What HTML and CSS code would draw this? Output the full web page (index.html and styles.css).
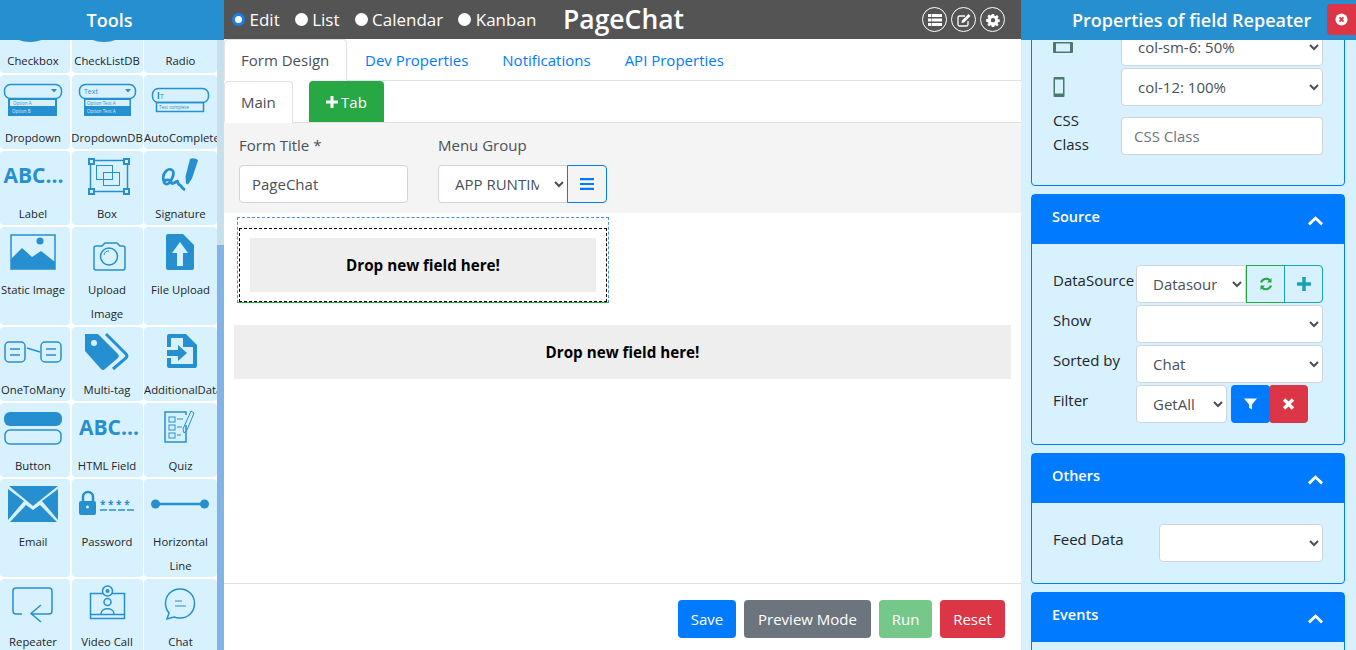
FILE: index.html
```html
<!DOCTYPE html>
<html lang="en">
<head>
<meta charset="utf-8">
<title>PageChat</title>
<link rel="stylesheet" href="styles.css">
</head>
<body>
<div class="app">
  <aside class="tools">
    <h2 class="tools-head">Tools</h2>
    <div class="tools-body">
      <div class="tile-grid">
        <div class="tile"><svg class="ico" viewBox="0 0 73 50"><ellipse cx="30" cy="36" rx="17" ry="8"/></svg><span class="lbl">Checkbox</span></div>
        <div class="tile"><svg class="ico" viewBox="0 0 73 50"><ellipse cx="32" cy="36" rx="17" ry="8"/></svg><span class="lbl">CheckListDB</span></div>
        <div class="tile"><svg class="ico" viewBox="0 0 73 50"></svg><span class="lbl">Radio</span></div>

        <div class="tile"><svg class="ico" viewBox="0 0 73 50"><rect class="ln" x="4.500" y="9.500" width="57" height="14" rx="6"/><path d="M51 14h6l-3 3.500z"/><rect x="8" y="24" width="49" height="17"/><rect class="lite" x="10" y="25" width="45" height="6"/><text class="tiny" x="13" y="30">Option A</text><text class="tiny wh" x="12" y="38">Option B</text></svg><span class="lbl">Dropdown</span></div>
        <div class="tile"><svg class="ico" viewBox="0 0 73 50"><rect class="ln" x="7.500" y="9.500" width="56" height="14" rx="6"/><path d="M53 14h6l-3 3.500z"/><text class="tiny2" x="12" y="19">Text</text><rect x="12" y="24" width="47" height="17"/><rect class="lite" x="13.500" y="25" width="44" height="6"/><text class="tiny" x="15" y="30">Option Text A</text><text class="tiny wh" x="15" y="38">Option Text A</text></svg><span class="lbl">DropdownDB</span></div>
        <div class="tile"><svg class="ico" viewBox="0 0 73 50"><rect class="ln" x="8.500" y="13.500" width="56" height="14" rx="6"/><path class="ln" d="M14.500 17v7"/><text class="tiny2" x="16" y="23.500">T</text><rect class="ln" x="12.500" y="27.500" width="47" height="9"/><text class="tiny" x="15" y="34">Text complete</text></svg><span class="lbl clip">AutoComplete</span></div>

        <div class="tile"><svg class="ico" viewBox="0 0 73 50"><text class="abc" x="3.500" y="32">ABC...</text></svg><span class="lbl">Label</span></div>
        <div class="tile"><svg class="ico" viewBox="0 0 73 50"><rect class="ln" x="18.500" y="9.500" width="37" height="31"/><rect class="ln thin" x="24.500" y="14.500" width="16" height="14"/><rect class="ln thin" x="31.500" y="21.500" width="16" height="13"/><rect x="16" y="7" width="7" height="7"/><rect x="51" y="7" width="7" height="7"/><rect x="16" y="37" width="7" height="7"/><rect x="51" y="37" width="7" height="7"/><rect class="lite" x="18" y="9" width="3" height="3"/><rect class="lite" x="53" y="9" width="3" height="3"/><rect class="lite" x="18" y="39" width="3" height="3"/><rect class="lite" x="53" y="39" width="3" height="3"/></svg><span class="lbl">Box</span></div>
        <div class="tile"><svg class="ico" viewBox="0 0 73 50"><path d="M46 8c2-1.500 7-.5 8 1.500l-6 18-4 6-2-1-.5-7z"/><path class="ln scrib" d="M20 31c-3-8 4-15 8-12s-2 15-6 14-1-5 3-4 1 5 5 3 3-3 4 0 2 1 3 3 2 3 4 4"/></svg><span class="lbl">Signature</span></div>

        <div class="tile"><svg class="ico" viewBox="0 0 73 50"><rect class="ln" x="11" y="8" width="44" height="34" stroke-width="2"/><path d="M11 42V32l11-11 10 9 9-6 14 11v7z"/><circle cx="40" cy="14" r="3.500"/></svg><span class="lbl">Static Image</span></div>
        <div class="tile"><svg class="ico" viewBox="0 0 73 50"><path class="ln" d="M22 21a2 2 0 0 1 2-2h6l3-3h12l3 3h3a2 2 0 0 1 2 2v20a2 2 0 0 1-2 2H24a2 2 0 0 1-2-2z"/><circle class="ln" cx="37" cy="29.500" r="8.500"/><path class="ln thin" d="M32 28a5 5 0 0 1 5-4"/></svg><span class="lbl">Upload<br>Image</span></div>
        <div class="tile"><svg class="ico" viewBox="0 0 73 50"><path d="M24 7h15l11 11v23a2 2 0 0 1-2 2H24a2 2 0 0 1-2-2V9a2 2 0 0 1 2-2z"/><path class="cut" d="M36 15l8 11h-5v13h-6V26h-5z"/></svg><span class="lbl">File Upload</span></div>

        <div class="tile"><svg class="ico" viewBox="0 0 73 50"><rect class="ln" x="5" y="15" width="20" height="20" rx="4"/><rect class="ln" x="41" y="15" width="20" height="20" rx="4"/><path class="ln" d="M10 22h10M10 28h10M46 22h10M46 28h10M27 21l13 4"/></svg><span class="lbl">OneToMany</span></div>
        <div class="tile"><svg class="ico" viewBox="0 0 73 50"><path d="M13 7h12a3 3 0 0 1 2 1l19 19a3 3 0 0 1 0 4L33 42a3 3 0 0 1-4 0L13 24z"/><circle class="cutc" cx="22" cy="16" r="3"/><path class="ln wide" d="M34 7l20 20a3 3 0 0 1 0 4L41 42"/></svg><span class="lbl">Multi-tag</span></div>
        <div class="tile"><svg class="ico" viewBox="0 0 73 50"><path d="M25 7h17l11 11v21a2 2 0 0 1-2 2H25a2 2 0 0 1-2-2V31h4v6h22V20H39V11H27v9h-4V9a2 2 0 0 1 2-2z"/><path d="M23 23h11v-5l9 8-9 8v-5H23z"/></svg><span class="lbl clip">AdditionalData</span></div>

        <div class="tile"><svg class="ico" viewBox="0 0 73 50"><rect x="4" y="9" width="58" height="14" rx="6"/><rect class="ln" x="5" y="27" width="56" height="14" rx="5"/></svg><span class="lbl">Button</span></div>
        <div class="tile"><svg class="ico" viewBox="0 0 73 50"><text class="abc" x="7" y="32">ABC...</text></svg><span class="lbl">HTML Field</span></div>
        <div class="tile"><svg class="ico" viewBox="0 0 73 50"><path class="ln" d="M42 22v17H21V9h21v3"/><rect class="ln thin" x="25" y="14" width="6" height="5"/><rect class="ln thin" x="25" y="22" width="6" height="5"/><rect class="ln thin" x="25" y="30" width="6" height="5"/><path class="ln thin" d="M33 16h6M33 24h5M33 32h4"/><path class="ln thin" d="M47 8l3 2-7 17-3 3-1-4z"/></svg><span class="lbl">Quiz</span></div>

        <div class="tile"><svg class="ico" viewBox="0 0 73 50"><path d="M9 7h49L33 27z"/><path d="M8 10l16 12L8 41zM58 10v31L42 22z"/><path d="M10 43l16-17 7 5 7-5 17 17z"/></svg><span class="lbl">Email</span></div>
        <div class="tile"><svg class="ico" viewBox="0 0 73 50"><path class="ln thick" d="M11 23v-5a5 5 0 0 1 10 0v4"/><rect x="7" y="22" width="17" height="14" rx="2"/><circle class="cutc" cx="15.500" cy="28" r="1.500"/><text class="stars" x="28" y="29">* * * *</text><path class="ln dash" d="M28 31h36"/></svg><span class="lbl">Password</span></div>
        <div class="tile"><svg class="ico" viewBox="0 0 73 50"><path class="ln thick" d="M8 25h56"/><circle cx="11.500" cy="25" r="4.500"/><circle cx="60.500" cy="25" r="4.500"/></svg><span class="lbl">Horizontal<br>Line</span></div>

        <div class="tile"><svg class="ico" viewBox="0 0 73 50"><path class="ln" d="M22 35h-6a3 3 0 0 1-3-3V12a3 3 0 0 1 3-3h33a3 3 0 0 1 3 3v20a3 3 0 0 1-3 3H31M41 26l-10 8.500 10 8.500"/></svg><span class="lbl">Repeater</span></div>
        <div class="tile"><svg class="ico" viewBox="0 0 73 50"><rect class="ln" x="18.500" y="14.500" width="34" height="25"/><path class="ln" d="M18 35.500h35"/><circle class="fillbg ln" cx="35.500" cy="12" r="5"/><circle cx="35.500" cy="12" r="2"/><circle class="ln" cx="35.500" cy="23" r="3.500"/><path class="ln" d="M29 35c0-7 13-7 13 0"/></svg><span class="lbl">Video Call</span></div>
        <div class="tile"><svg class="ico" viewBox="0 0 73 50"><path class="ln" d="M36 10c8 0 14.500 6 14.500 14.500S44 39 36 39a15 15 0 0 1-6-1l-7 2 2-6a15 15 0 0 1-3.500-9.500C21.500 16 28 10 36 10z"/><path class="ln thin" d="M31 22h7M31 27h11"/></svg><span class="lbl">Chat</span></div>
      </div>
      <div class="scroll-track"><div class="scroll-thumb"></div></div>
    </div>
  </aside>

  <main class="center">
    <header class="topbar">
      <div class="modes">
        <label class="mode"><input class="radio" type="radio" name="mode" checked>Edit</label>
        <label class="mode"><input class="radio" type="radio" name="mode">List</label>
        <label class="mode"><input class="radio" type="radio" name="mode">Calendar</label>
        <label class="mode"><input class="radio" type="radio" name="mode">Kanban</label>
      </div>
      <h1 class="page-title">PageChat</h1>
      <div class="round-btns">
        <span class="round"><svg viewBox="0 0 16 16"><path d="M1 2h14v3H1zM1 6.500h14v3H1zM1 11h14v3H1z"/><path class="gap" d="M4.500 2v12"/></svg></span>
        <span class="round"><svg viewBox="0 0 16 16"><path class="outl" d="M12 9v3.500a1.500 1.500 0 0 1-1.500 1.500h-7A1.500 1.500 0 0 1 2 12.500v-7A1.500 1.500 0 0 1 3.500 4H9"/><path d="M12.500 2l2 2-6.500 6.500-2.500.5.500-2.500z"/></svg></span>
        <span class="round"><svg class="cog" viewBox="0 0 16 16"><path fill-rule="evenodd" d="M6.700 1h2.600l.4 2 1.200.5 1.700-1.100 1.800 1.800-1.100 1.700.5 1.200 2 .4v2.600l-2 .4-.5 1.200 1.100 1.700-1.800 1.800-1.700-1.100-1.200.5-.4 2H6.700l-.4-2-1.200-.5-1.700 1.100-1.800-1.800 1.100-1.700-.5-1.200-2-.4V6.900l2-.4.5-1.200-1.100-1.700 1.800-1.800 1.700 1.100 1.200-.5zM8 5.700a2.500 2.500 0 1 0 0 5 2.500 2.500 0 0 0 0-5z"/></svg></span>
      </div>
    </header>

    <nav class="tabs main-tabs">
      <a class="tab active">Form Design</a>
      <a class="tab">Dev Properties</a>
      <a class="tab">Notifications</a>
      <a class="tab">API Properties</a>
    </nav>
    <nav class="tabs sub-tabs">
      <a class="tab active">Main</a>
      <a class="add-tab"><svg class="plus" viewBox="0 0 12 12"><path d="M4.500 0h3v4.500H12v3H7.500V12h-3V7.500H0v-3h4.500z"/></svg>Tab</a>
    </nav>

    <section class="form-head">
      <div class="fg title-field">
        <label class="fl">Form Title *</label>
        <input class="ctl" type="text" value="PageChat">
      </div>
      <div class="fg">
        <label class="fl">Menu Group</label>
        <div class="group">
          <select class="ctl menu-select"><option>APP RUNTIME</option></select>
          <button class="menu-btn"><svg viewBox="0 0 14 12"><path d="M0 0h14v2.200H0zM0 4.900h14v2.200H0zM0 9.800h14V12H0z"/></svg></button>
        </div>
      </div>
    </section>

    <section class="canvas">
      <div class="outer-drop">
        <div class="inner-drop"><div class="drop">Drop new field here!</div></div>
      </div>
      <div class="drop wide-drop">Drop new field here!</div>
    </section>

    <footer class="actions">
      <button class="btn b-blue">Save</button>
      <button class="btn b-grey">Preview Mode</button>
      <button class="btn b-green">Run</button>
      <button class="btn b-red">Reset</button>
    </footer>
  </main>

  <aside class="props">
    <header class="props-head">
      <h2 class="props-title">Properties of field Repeater</h2>
      <button class="close"><svg viewBox="0 0 14 14"><circle cx="7" cy="7" r="6.500"/><path d="M4.800 4.800l4.400 4.400M9.200 4.800l-4.400 4.400"/></svg></button>
    </header>
    <div class="props-body">
      <div class="card first-card">
        <div class="card-body">
          <div class="row r-first">
            <span class="dev"><svg class="tablet" viewBox="0 0 20 11"><path fill-rule="evenodd" d="M1 0h18a1 1 0 0 1 1 1v9a1 1 0 0 1-1 1H1a1 1 0 0 1-1-1V1a1 1 0 0 1 1-1zm2 1.500v8h14v-8z"/></svg></span>
            <select class="ctl"><option>col-sm-6: 50%</option></select>
          </div>
          <div class="row">
            <span class="dev"><svg class="phone" viewBox="0 0 11 20"><path fill-rule="evenodd" d="M1 0h9a1 1 0 0 1 1 1v18a1 1 0 0 1-1 1H1a1 1 0 0 1-1-1V1a1 1 0 0 1 1-1zm.5 2.500v14h8v-14z"/></svg></span>
            <select class="ctl"><option>col-12: 100%</option></select>
          </div>
          <div class="row r-css">
            <label class="rl css-l">CSS<br>Class</label>
            <input class="ctl css-in" type="text" placeholder="CSS Class">
          </div>
        </div>
      </div>

      <div class="card">
        <div class="card-head">Source<svg class="chev" viewBox="0 0 16 10"><path d="M8 0l8 7.500-2 2.200-6-5.700-6 5.700L0 7.500z"/></svg></div>
        <div class="card-body source-body">
          <div class="row src-row">
            <label class="rl">DataSource</label>
            <div class="group">
              <select class="ctl ds-select"><option>Datasource</option></select>
              <button class="ib ib-green"><svg viewBox="0 0 16 16"><path d="M13.500 2v4.500H9l1.700-1.700A4 4 0 0 0 4.300 6.500H2A6.200 6.200 0 0 1 12.200 3.300zM2.500 14V9.500H7l-1.700 1.700a4 4 0 0 0 6.400-1.700H14a6.200 6.200 0 0 1-10.200 3.200z"/></svg></button>
              <button class="ib ib-teal"><svg viewBox="0 0 12 12"><path d="M4.500 0h3v4.500H12v3H7.500V12h-3V7.500H0v-3h4.500z"/></svg></button>
            </div>
          </div>
          <div class="row src-row">
            <label class="rl">Show</label>
            <select class="ctl"><option></option></select>
          </div>
          <div class="row src-row">
            <label class="rl">Sorted by</label>
            <select class="ctl"><option>Chat</option></select>
          </div>
          <div class="row src-row">
            <label class="rl">Filter</label>
            <div class="group filter-group">
              <select class="ctl filter-select"><option>GetAll</option></select>
              <button class="fb fb-blue"><svg viewBox="0 0 14 14"><path d="M0 1h14L8.500 7.500V13l-3-2V7.500z"/></svg></button>
              <button class="fb fb-red"><svg viewBox="0 0 12 12"><path d="M3 .8L6 3.800 9 .8l2.200 2.200-3 3 3 3L9 11.200l-3-3-3 3L.8 9l3-3-3-3z"/></svg></button>
            </div>
          </div>
        </div>
      </div>

      <div class="card">
        <div class="card-head">Others<svg class="chev" viewBox="0 0 16 10"><path d="M8 0l8 7.500-2 2.200-6-5.700-6 5.700L0 7.500z"/></svg></div>
        <div class="card-body others-body">
          <div class="row feed-row">
            <label class="rl">Feed Data</label>
            <select class="ctl"><option></option></select>
          </div>
        </div>
      </div>

      <div class="card">
        <div class="card-head">Events<svg class="chev" viewBox="0 0 16 10"><path d="M8 0l8 7.500-2 2.200-6-5.700-6 5.700L0 7.500z"/></svg></div>
        <div class="card-body events-body"></div>
      </div>
    </div>
  </aside>
</div>
</body>
</html>
```

FILE: styles.css
```css
* { box-sizing: border-box; }
html, body { margin: 0; height: 100%; overflow: hidden; }
body { font-family: "Open Sans", "Noto Sans", sans-serif; font-size: 15px; color: #212529; background: #fff; }
h1, h2 { margin: 0; }
button { font-family: inherit; }

.app { display: flex; width: 1356px; height: 650px; overflow: hidden; }

/* left tool panel */
.tools { width: 224px; flex: none; display: flex; flex-direction: column; }
.tools-head { height: 40px; flex: none; background: #268fd0; color: #fff; font-size: 18px; font-weight: 600; line-height: 40px; text-align: center; padding-right: 5px; }
.tools-body { flex: 1; min-height: 0; display: flex; overflow: hidden; }
.tile-grid { width: 217px; height: 700px; flex: none; margin-top: -42px; display: grid; grid-template-columns: 70px 71px 73px; grid-template-rows: 75px 74px 74px 98px 74px 74px 98px 98px; column-gap: 1.500px; row-gap: 2px; align-content: start; }
.tile { background: #d8f1fe; border-radius: 4px; overflow: hidden; text-align: center; }
.ico { display: block; width: 73px; height: 50px; fill: #268fd0; }
.lbl { display: block; font-size: 11.300px; line-height: 24px; color: #212529; margin: 1px -3px 0; }
.tile:nth-child(3n+1) .lbl { margin-left: -5px; margin-right: -1px; }
.lbl.clip { white-space: nowrap; text-align: left; margin-left: 0; }
.ln { fill: none; stroke: #268fd0; stroke-width: 1.500; }
.thin { stroke-width: 1; }
.thick { stroke-width: 2.500; }
.wide { stroke-width: 3; }
.scrib { stroke-width: 2.800; }
.lite { fill: #d8f1fe; }
.cut { fill: #d8f1fe; }
.cutc { fill: #d8f1fe; }
.fillbg { fill: #d8f1fe; }
.tiny { font-size: 4.500px; fill: #268fd0; }
.tiny2 { font-size: 7px; fill: #268fd0; }
.wh { fill: #d8f1fe; }
.abc { font-size: 21px; font-weight: 700; fill: #268fd0; }
.stars { font-size: 10px; font-weight: 700; fill: #268fd0; }
.dash { stroke-dasharray: 7 2; }
.scroll-track { width: 7px; flex: none; background: #c8e0ee; display: flex; flex-direction: column; justify-content: flex-end; }
.scroll-thumb { height: 405px; background: #82b5e6; }

/* centre */
.center { width: 797px; flex: none; display: flex; flex-direction: column; }
.topbar { height: 39px; flex: none; background: #545454; color: #fff; display: flex; align-items: center; padding-left: 8px; }
.modes { display: flex; gap: 15px; width: 331px; flex: none; }
.mode { display: flex; align-items: center; font-size: 17px; line-height: 24px; }
.radio { appearance: none; width: 13px; height: 13px; margin: 0 4.500px 0 0; background: #fff; border-radius: 50%; }
.radio:checked { border: 3px solid #1a7fe6; }
.page-title { font-size: 26.500px; font-weight: 600; line-height: 39px; flex: 1; }
.round-btns { display: flex; gap: 4px; padding-right: 16px; }
.round { width: 25px; height: 25px; border: 1px solid #fff; border-radius: 50%; display: flex; align-items: center; justify-content: center; }
.round svg { width: 16px; height: 16px; fill: #fff; }
.round svg.cog { width: 14px; height: 14px; }
.round .gap { stroke: #545454; stroke-width: .6; fill: none; }
.round .outl { stroke: #fff; stroke-width: 1.300; fill: none; }

.tabs { display: flex; flex: none; border-bottom: 1px solid #dee2e6; }
.main-tabs { height: 42px; }
.sub-tabs { height: 42px; }
.tab { display: block; font-size: 15px; line-height: 24px; padding: 8px 16px 0; color: #007bff; margin-bottom: -1px; border: 1px solid transparent; border-radius: 4px 4px 0 0; white-space: nowrap; }
.tab.active { color: #495057; background: #fff; border-color: #dee2e6 #dee2e6 #fff; }
.main-tabs .tab.active { width: 123px; }
.main-tabs .tab:nth-child(2) { margin-left: 1px; }
.sub-tabs .tab.active { width: 69px; }
.add-tab { margin-left: 16px; width: 75px; background: #28a745; color: #fff; border-radius: 4px 4px 0 0; font-size: 15px; display: flex; align-items: center; justify-content: center; gap: 3px; }
.plus { width: 12px; height: 12px; fill: #fff; }

.form-head { height: 90px; flex: none; background: #f4f4f4; display: flex; padding: 10px 0 0 15px; gap: 30px; }
.fg { display: flex; flex-direction: column; }
.title-field { width: 169px; }
.fl { font-size: 15px; line-height: 24px; color: #495057; margin-bottom: 8px; }
.ctl { display: block; width: 100%; height: 38px; border: 1px solid #ced4da; border-radius: 4px; background: #fff; color: #495057; font: inherit; font-size: 15px; padding: 0 12px; }
.ctl::placeholder { color: #6c757d; opacity: 1; }
.group { display: flex; }
.menu-select { width: 129px; border-radius: 4px 0 0 4px; border-right: 0; }
.menu-btn { width: 40px; height: 38px; padding: 0; border: 1px solid #007bff; border-radius: 0 4px 4px 0; background: transparent; display: flex; align-items: center; justify-content: center; }
.menu-btn svg { width: 14px; height: 12px; fill: #007bff; }

.canvas { flex: 1; min-height: 0; padding: 4px 10px 0; }
.outer-drop { width: 372px; height: 86px; margin-left: 3px; border: 1px dashed #4a90e2; padding: 10px 1px 0; }
.inner-drop { height: 74px; border: 1px dashed #000; padding: 9px 10px; box-shadow: 0 1px 0 #28a745; }
.drop { height: 54px; background: #eee; color: #000; font-weight: 700; font-size: 15.200px; display: flex; align-items: center; justify-content: center; }
.wide-drop { margin-top: 22px; width: 777px; }

.actions { height: 67px; flex: none; border-top: 1px solid #dee2e6; display: flex; justify-content: flex-end; align-items: flex-start; gap: 8px; padding: 16px 16px 0 0; }
.btn { height: 38px; padding: 0; border: 0; border-radius: 4px; color: #fff; font-size: 15px; }
.b-blue { background: #007bff; width: 58px; }
.b-grey { background: #6c757d; width: 127px; }
.b-green { background: #75c78a; width: 53px; }
.b-red { background: #dc3545; width: 65px; }

/* right panel */
.props { flex: 1; min-width: 0; background: #d8f1fe; display: flex; flex-direction: column; }
.props-head { height: 40px; flex: none; background: #268fd0; display: flex; align-items: center; position: relative; z-index: 1; }
.props-title { color: #fff; font-size: 18px; font-weight: 600; margin-left: 51px; white-space: nowrap; }
.close { position: absolute; right: 0; top: 4px; width: 29px; height: 31px; border: 0; padding: 0; background: #dc3545; border-radius: 4px 0 0 4px; display: flex; align-items: center; justify-content: center; }
.close svg { width: 13px; height: 13px; }
.close circle { fill: #fff; }
.close path { stroke: #dc3545; stroke-width: 1.800; }
.props-body { flex: 1; min-height: 0; overflow: hidden; padding: 0 11px 0 10px; }
.card { border: 1px solid #007bff; border-radius: 4px; margin-bottom: 8px; }
.first-card { margin-top: -30px; height: 176px; }
.card-head { height: 49px; background: #007bff; color: #fff; font-size: 14.500px; font-weight: 600; padding: 10px 0 0 20px; line-height: 24px; position: relative; }
.chev { position: absolute; right: 21px; top: 21px; width: 15px; height: 10px; fill: #fff; }
.card-body { padding: 0 21px; }
.first-card .card-body { padding-top: 17px; }
.row { display: flex; margin-bottom: 2px; }
.row > .ctl, .row > .group { width: 202px; flex: none; }
.dev { width: 68px; flex: none; display: flex; align-items: center; }
.dev svg { fill: #4a7a6a; }
.tablet { width: 20px; height: 11px; }
.phone { width: 12px; height: 20px; }
.r-css { margin-top: 2px; }
.rl { font-size: 15px; line-height: 24px; color: #212529; flex: none; }
.css-l { width: 68px; }
.css-in { margin-top: 9px; }
.source-body { padding-top: 21px; height: 200px; }
.src-row .rl { width: 83px; padding-top: 3px; white-space: nowrap; }
.src-row > .ctl, .src-row > .group { width: 187px; }
.ds-select { width: 110px; border-radius: 4px 0 0 4px; flex: none; }
.ib { width: 39px; height: 38px; padding: 0; background: transparent; display: flex; align-items: center; justify-content: center; }
.ib svg { width: 14px; height: 14px; }
.ib-green svg { width: 16px; height: 16px; }
.ib-green { border: 1px solid #28a745; margin-right: -1px; }
.ib-green svg { fill: #28a745; }
.ib-teal { border: 1px solid #17a2b8; border-radius: 0 4px 4px 0; }
.ib-teal svg { fill: #17a2b8; }
.filter-select { width: 91px; flex: none; }
.fb { width: 39px; height: 38px; padding: 0; border: 0; display: flex; align-items: center; justify-content: center; border-radius: 4px; }
.fb svg { width: 13px; height: 14px; fill: #fff; }
.fb-blue { background: #007bff; margin-left: 4px; }
.fb-red { background: #dc3545; margin-left: -1px; }
.others-body { padding-top: 21px; height: 80px; }
.feed-row { align-items: flex-start; }
.feed-row .rl { width: 106px; padding-top: 3px; }
.feed-row > .ctl { width: 164px; }
.events-body { height: 60px; }
```
